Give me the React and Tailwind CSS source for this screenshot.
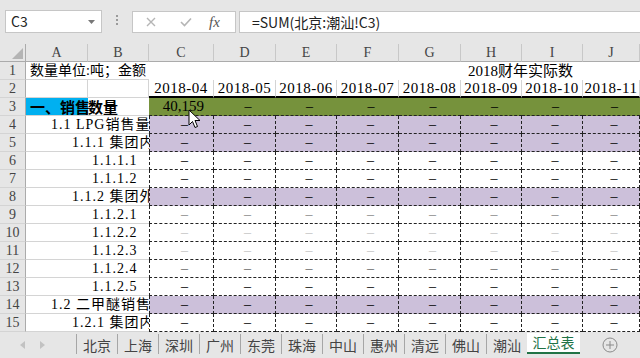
import React from 'react';

const serif = "font-['Liberation_Serif','Noto_Sans_CJK_SC',serif]";
const sans = "font-['Noto_Sans_CJK_SC','Liberation_Sans',sans-serif]";

const colW = ['w-[65px]', 'w-[62px]', 'w-[61px]', 'w-[62px]', 'w-[62px]', 'w-[61px]', 'w-[61px]', 'flex-1'];
const letters = ['C', 'D', 'E', 'F', 'G', 'H', 'I', 'J'];
const months = ['2018-04', '2018-05', '2018-06', '2018-07', '2018-08', '2018-09', '2018-10', '2018-11'];

const rows = [
  { n: 4, label: '1.1 LPG销售量', pad: 'pl-[25px]', purple: true },
  { n: 5, label: '1.1.1 集团内', pad: 'pl-[46px]', purple: true },
  { n: 6, label: '1.1.1.1', pad: 'pl-[66px]' },
  { n: 7, label: '1.1.1.2', pad: 'pl-[66px]' },
  { n: 8, label: '1.1.2 集团外', pad: 'pl-[46px]', purple: true },
  { n: 9, label: '1.1.2.1', pad: 'pl-[66px]', dash: 'text-[#8a8a8a]' },
  { n: 10, label: '1.1.2.2', pad: 'pl-[66px]', dash: 'text-[#c4c4c4]' },
  { n: 11, label: '1.1.2.3', pad: 'pl-[66px]', dash: 'text-[#c4c4c4]' },
  { n: 12, label: '1.1.2.4', pad: 'pl-[66px]', dash: 'text-[#6a6a6a]' },
  { n: 13, label: '1.1.2.5', pad: 'pl-[66px]' },
  { n: 14, label: '1.2 二甲醚销售', pad: 'pl-[25px]', purple: true },
  { n: 15, label: '1.2.1 集团内', pad: 'pl-[46px]' },
];

const tabs = ['北京', '上海', '深圳', '广州', '东莞', '珠海', '中山', '惠州', '清远', '佛山', '潮汕'];

const RowHead = ({ n }) => (
  <div className={`w-[26px] shrink-0 h-full bg-[#e6e6e6] border-r border-r-[#ababab] border-b border-b-[#d4d4d4] flex items-center justify-center text-[14px] text-[#444] ${serif}`}>
    {n}
  </div>
);

const Cursor = () => (
  <svg className="absolute left-[188px] top-[109px]" width="13" height="20" viewBox="0 0 13 20">
    <path d="M1 1 L1 16 L4.5 12.5 L7 18.5 L9.5 17.5 L7 11.5 L12 11.5 Z" fill="#fff" stroke="#000" strokeWidth="1" strokeLinejoin="round" />
  </svg>
);

function FormulaBar() {
  return (
    <div className="h-[44px] bg-[#e6e6e6] flex items-start pt-[10px]">
      <div className={`ml-[5px] w-[97px] h-[23px] bg-white border border-[#c6c6c6] flex items-center justify-between pl-[5px] pr-[6px] text-[14px] text-[#222] ${sans}`}>
        <span>C3</span>
        <svg width="7" height="4" viewBox="0 0 7 4"><path d="M0 0 L7 0 L3.5 4 Z" fill="#777" /></svg>
      </div>
      <div className="ml-[14px] mt-[5px] flex flex-col gap-[2px]">
        <div className="w-[2px] h-[2px] bg-[#9a9a9a]" />
        <div className="w-[2px] h-[2px] bg-[#9a9a9a]" />
        <div className="w-[2px] h-[2px] bg-[#9a9a9a]" />
      </div>
      <div className="ml-[14px] mt-[1px] w-[104px] h-[22px] bg-white border border-[#c6c6c6] flex items-center">
        <svg className="ml-[13px]" width="10" height="10" viewBox="0 0 10 10">
          <path d="M1 1 L9 9 M9 1 L1 9" stroke="#b5b5b5" strokeWidth="1.4" />
        </svg>
        <svg className="ml-[24px]" width="12" height="10" viewBox="0 0 12 10">
          <path d="M1 5 L4.5 8.5 L11 1.5" stroke="#b5b5b5" strokeWidth="1.6" fill="none" />
        </svg>
        <span className="ml-[17px] text-[15px] italic text-[#555] font-['Liberation_Serif',serif]">fx</span>
      </div>
      <div className={`ml-[3px] mt-[1px] flex-1 h-[22px] bg-white border border-[#c6c6c6] border-r-0 flex items-center pl-[12px] text-[14px] text-[#222] ${sans}`}>
        =SUM(北京:潮汕!C3)
      </div>
    </div>
  );
}

function ColumnHeader() {
  return (
    <div className={`flex h-[18px] bg-[#e6e6e6] text-[14px] text-[#444] ${serif}`}>
      <div className="w-[26px] h-full border-r border-r-[#ababab] border-b border-b-[#ababab] flex items-end justify-end pr-[2px] pb-[2px]">
        <svg width="11" height="11" viewBox="0 0 11 11"><path d="M11 0 L11 11 L0 11 Z" fill="#b4b4b4" /></svg>
      </div>
      <div className="w-[62px] h-full border-r border-r-[#c8c8c8] border-b border-b-[#ababab] flex items-center justify-center">A</div>
      <div className="w-[61px] h-full border-r border-r-[#c8c8c8] border-b border-b-[#ababab] flex items-center justify-center">B</div>
      {letters.map((l, i) => (
        <div key={l} className={`${colW[i]} h-full border-r border-r-[#c8c8c8] border-b border-b-[#ababab] flex items-center justify-center`}>{l}</div>
      ))}
    </div>
  );
}

function DataRow({ n, label, pad, purple, dash }) {
  return (
    <div className="flex h-[18px]">
      <RowHead n={n} />
      <div className={`w-[123px] shrink-0 overflow-hidden whitespace-nowrap border-b border-[#d4d4d4] ${pad} text-[14px] leading-[17px] tracking-[1px] text-black ${serif}`}>
        {label}
      </div>
      {colW.map((w, i) => (
        <div
          key={i}
          className={`${w} ${i === 0 ? 'border-l' : ''} border-r border-b border-dashed border-[#222] ${purple ? 'bg-[#ccc0da]' : 'bg-white'} flex items-center justify-center pl-[6px] text-[14px] ${dash || 'text-black'} ${serif}`}
        >
          –
        </div>
      ))}
    </div>
  );
}

function TabBar() {
  return (
    <div className={`h-[26px] bg-[#e6e6e6] flex items-start text-[14px] text-[#444] ${sans}`}>
      <div className="w-[76px] h-full flex items-center pl-[20px] gap-[15px]">
        <svg width="5" height="8" viewBox="0 0 5 8"><path d="M5 0 L5 8 L0 4 Z" fill="#c2c2c2" /></svg>
        <svg width="5" height="8" viewBox="0 0 5 8"><path d="M0 0 L0 8 L5 4 Z" fill="#c2c2c2" /></svg>
      </div>
      {tabs.map((t) => (
        <div key={t} className="w-[41px] h-[20px] mt-[2px] flex items-center justify-center border-l border-[#a6a6a6] leading-none">
          <span className="mt-[2px]">{t}</span>
        </div>
      ))}
      <div className="w-[53px] h-[21px] mt-[1px] bg-white border-b-2 border-[#217346] flex items-center justify-center text-[#217346]">
        汇总表
      </div>
      <div className="flex-1 flex justify-center pt-[5px]">
        <svg width="16" height="16" viewBox="0 0 16 16">
          <circle cx="8" cy="8" r="7" fill="none" stroke="#8a8a8a" strokeWidth="1" />
          <path d="M8 4 L8 12 M4 8 L12 8" stroke="#8a8a8a" strokeWidth="1" />
        </svg>
      </div>
    </div>
  );
}

export default function App() {
  return (
    <div className="relative w-[640px] h-[358px] overflow-hidden bg-white">
      <FormulaBar />
      <ColumnHeader />

      {/* row 1 */}
      <div className="flex h-[18px]">
        <RowHead n={1} />
        <div className={`w-[123px] shrink-0 overflow-hidden whitespace-nowrap border-b border-[#d4d4d4] pl-[4px] text-[14px] leading-[17px] text-black ${serif}`}>
          数量单位:吨；金额
        </div>
        <div className={`flex-1 whitespace-nowrap pl-[319px] text-[15px] leading-[18px] text-black ${serif}`}>2018财年实际数</div>
      </div>

      {/* row 2 */}
      <div className="flex h-[18px]">
        <RowHead n={2} />
        <div className="w-[62px] border-r border-b border-[#d4d4d4]" />
        <div className="w-[61px] border-r border-b border-[#d4d4d4]" />
        {months.map((m, i) => (
          <div key={m} className={`${colW[i]} border-r border-r-[#d4d4d4] border-b-2 border-b-black flex items-center justify-center whitespace-nowrap text-[15px] tracking-[0.5px] text-black ${serif}`}>
            {m}
          </div>
        ))}
      </div>

      {/* row 3 */}
      <div className="flex h-[18px]">
        <RowHead n={3} />
        <div className={`w-[62px] shrink-0 whitespace-nowrap bg-[#00b0f0] border-b border-[#d4d4d4] pl-[4px] text-[15px] leading-[17px] font-semibold text-black ${sans}`}>
          一、销售
        </div>
        <div className={`w-[61px] shrink-0 whitespace-nowrap border-b border-[#d4d4d4] text-[15px] leading-[17px] font-semibold text-black ${sans}`}>
          数量
        </div>
        {colW.map((w, i) => (
          <div
            key={i}
            className={`${w} bg-[#76923c] border-b border-dashed border-[#222] flex items-center ${i === 0 ? 'text-[15px]' : 'text-[14px]'} text-black ${serif} ${i === 0 ? 'justify-end pr-[10px]' : 'justify-center pl-[6px]'}`}
          >
            {i === 0 ? '40,159' : '–'}
          </div>
        ))}
      </div>

      {rows.map((r) => (
        <DataRow key={r.n} {...r} />
      ))}

      <TabBar />
      <Cursor />
    </div>
  );
}
